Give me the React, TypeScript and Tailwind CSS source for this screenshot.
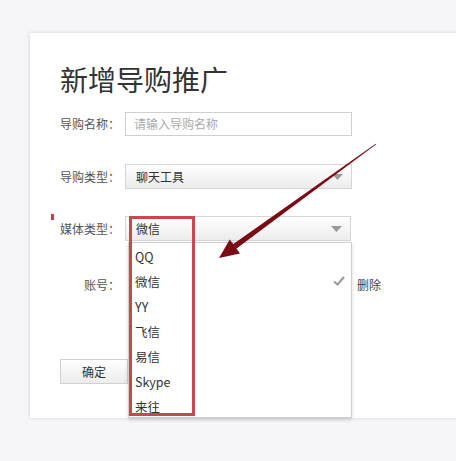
import React from "react";

const items = ["QQ", "微信", "YY", "飞信", "易信", "Skype", "来往"];

function Caret() {
  return (
    <svg width="11" height="6" viewBox="0 0 11 6" className="shrink-0">
      <path d="M0 0h11L5.5 6z" fill="#9a9a9a" />
    </svg>
  );
}

function Label({ text }: { text: string }) {
  return <div className="w-[60px] shrink-0 text-right text-[12px] text-[#555]">{text}</div>;
}

export default function App() {
  return (
    <div className="relative w-[456px] h-[461px] overflow-hidden bg-[#f6f5f7] pt-[33px] pl-[30px] font-['Noto_Sans_CJK_SC','Noto_Sans',sans-serif]">
      <div className="relative w-[440px] h-[385px] bg-white pl-[30px] pt-[32px] shadow-[0_0_4px_rgba(0,0,0,0.14)]">
        <h1 className="text-[28px] leading-none text-[#333]">新增导购推广</h1>

        <div className="mt-[19px] flex items-center gap-[5px]">
          <Label text="导购名称：" />
          <div className="flex h-[24px] w-[227px] items-center border border-[#cfcfcf] pl-[8px] text-[12px] text-[#aaa]">
            请输入导购名称
          </div>
        </div>

        <div className="mt-[28px] flex items-center gap-[5px]">
          <Label text="导购类型：" />
          <div className="flex h-[25px] w-[227px] items-center justify-between border border-[#d6d6d6] bg-gradient-to-b from-white to-[#ececec] pl-[10px] pr-[8px] text-[12px] text-[#333]">
            <span>聊天工具</span>
            <Caret />
          </div>
        </div>

        <div className="relative mt-[27px] flex items-center gap-[5px]">
          <div className="absolute left-[-9px] top-[-2px] h-[6px] w-[3px] bg-[#b5464f]" />
          <Label text="媒体类型：" />
          <div className="flex h-[25px] w-[226px] items-center justify-between border border-[#d6d6d6] bg-gradient-to-b from-white to-[#ececec] pl-[10px] pr-[8px] text-[12px] text-[#333]">
            <span>微信</span>
            <Caret />
          </div>
        </div>

        <div className="mt-[32px] flex h-[24px] items-center gap-[5px]">
          <Label text="账号：" />
          <div className="ml-[232px] text-[12px] text-[#444]">删除</div>
        </div>

        <button className="mt-[62px] flex h-[25px] w-[68px] items-center justify-center border border-[#d2d2d2] bg-gradient-to-b from-white to-[#ececec] text-[12px] text-[#333]">
          确定
        </button>

        {/* open list of the media-type select */}
        <div className="absolute left-[98px] top-[209px] h-[176px] w-[224px] border border-[#cfcfcf] bg-white pt-[2px] shadow-[0_2px_4px_rgba(0,0,0,0.15)]">
          {items.map((it) => (
            <div key={it} className="flex h-[25px] items-center pl-[6px] text-[12.5px] text-[#333]">
              {it}
            </div>
          ))}
        </div>

        {/* check mark */}
        <svg width="12" height="10" viewBox="0 0 12 10" className="absolute left-[303px] top-[243px]">
          <path d="M1 5.5l3.5 3L11 1" fill="none" stroke="#9c9c9c" strokeWidth="2.2" />
        </svg>

        {/* red highlight box */}
        <div className="absolute left-[99px] top-[183px] h-[200px] w-[66px] border-[3px] border-[#c64a4d]" />
      </div>

      {/* annotation arrow */}
      <svg width="456" height="461" className="pointer-events-none absolute left-0 top-0">
        <polygon points="376.3,144.3 375.7,143.7 233,244.2 236.2,248.8" fill="#7a0b14" />
        <polygon points="219,258 229.8,239.6 240,253.6" fill="#7a0b14" />
      </svg>
    </div>
  );
}
